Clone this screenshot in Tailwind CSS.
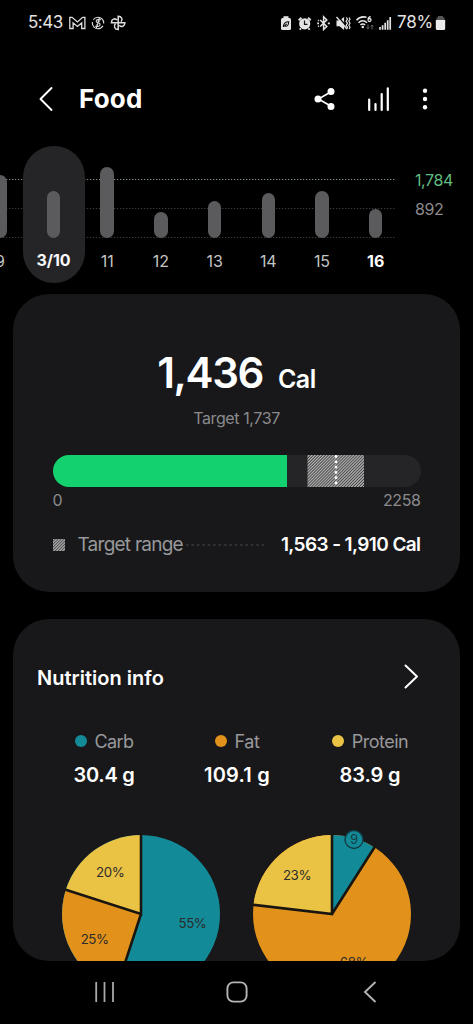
<!DOCTYPE html>
<html lang="en">
<head>
<meta charset="utf-8">
<title>Food</title>
<script src="https://cdn.jsdelivr.net/npm/@tailwindcss/browser@4"></script>
</head>
<body class="bg-black">
<div class="flex h-[1024px] w-[473px] flex-col overflow-hidden bg-black font-['Inter',sans-serif] text-white">

  <!-- Status bar -->
  <header class="flex h-[45px] shrink-0 items-center justify-between pl-7 pr-[27px]">
    <div class="flex items-center text-[#e4e4e4]">
      <span class="w-[41px] text-[17px] tracking-[-0.5px]">5:43</span>
      <svg class="h-[16px] w-[60px]" viewBox="0 0 60 16" fill="none" stroke="#dedede" stroke-width="1.3">
        <path d="M.8 13.5V2.3h2.3L8.4 7l5.3-4.700h2.200v11.200h-3.200V7.800L8.400 11.400 4.100 7.800v5.700z"/>
        <circle cx="29" cy="8" r="5.700" stroke-dasharray="15.500 2.400" stroke-dashoffset="-3" stroke-width="1.100"/>
        <path d="M31.800 4.600h-2.600c-2.600 0-2.900 2.700 0 3.200 2.700.4 2.400 3.600-.3 3.600h-2.600M30.800 6.300h-1.500M27.300 9.800h1.400M30.400 2.800l-3 10.300" stroke-width="1.100"/>
        <path d="M49.200 7.700V1.200c3.500 0 5.100 3.500 2.700 5.600M49.200 7.700h6.700c0 3.500-3.500 5.100-5.600 2.600M49.200 7.700v6.900c-3.500 0-5-3.700-2.700-5.800M49.200 7.700h-6.800c0-3.500 3.600-5 5.600-2.600" stroke-width="1.500"/>
      </svg>
    </div>
    <div class="flex items-center">
      <svg class="h-[16px] w-[117px]" viewBox="280 14 117 16" fill="none" stroke="#e4e4e4" stroke-width="1.200">
        <rect x="281" y="17" width="10" height="12" rx="1.500" fill="#e4e4e4" stroke="none"/>
        <path d="M283.500 16.200h5" stroke-width="2"/>
        <path d="M283.300 26c.2-3.500 1.800-5.200 5.400-5.200 0 3.600-1.600 5-4.200 4.200l2.200-2.200" stroke="#111" stroke-width="1.100"/>
        <circle cx="304.700" cy="22.800" r="4.700" stroke-width="1.800" fill="#e4e4e4"/>
        <path d="M298.700 19.300l2.700-2.500M310.700 19.300l-2.700-2.500M301 27.300l-1.300 1.300M308.400 27.300l1.300 1.300" stroke-width="1.900"/>
        <path d="M304.500 19.500v3.800h3" stroke="#111" stroke-width="1.200"/>
        <path d="M320.200 19l6.600 6.500-3.200 3V15.800l3.200 3.100-6.600 6.600" stroke-width="1.500"/>
        <path d="M317.200 22.300h1.800M327.800 22.300h2M318 19.200l.8.500M318 25.400l.8-.5" stroke-width="1.800"/>
        <path d="M336.500 19.500h3l4.600-3.600v13.200l-4.600-3.800h-3z" fill="#e4e4e4" stroke="none"/>
        <path d="M338.500 16l9 10.500" stroke="#000" stroke-width="1.200"/>
        <path d="M336.500 16l10.500 12" stroke-width="1.400"/>
        <path d="M346.300 16.500l1.200 1.800-1.400 2 1.400 2-1.400 2 1.400 2-.8 1.800M349 16.500l1 1.800-1.200 2 1.200 2-1.200 2 1.200 2-.8 1.800" stroke-width="1.200"/>
        <path d="M356.500 19.200c3.200-3.700 7-3.700 10-2.900M358.500 21.700c2.500-2.700 6-2.700 8.500 0M360.500 24c1.300-1.500 3.300-1.500 4.600 0" stroke-width="1.500"/>
        <circle cx="362.800" cy="26" r="1.300" fill="#e4e4e4" stroke="none"/>
        <path d="M370.700 15.700c-2 .2-2.700 1.700-2.700 3.300a1.500 1.500 0 1 0 1.500-1.500c-.8 0-1.300.5-1.500 1" stroke-width="1.300"/>
        <path d="M368 23.500v4.500m-1.300-1.500 1.300 1.500 1.300-1.500M372 28.500V24m-1.300 1.500 1.300-1.500 1.300 1.500" stroke="#666" stroke-width="1"/>
        <path d="M380 28.800v-2.800M382.600 28.800v-4.600M385.200 28.800v-7M387.700 28.800v-9.500M390.200 28.800V16" stroke-width="1.700"/>
      </svg>
      <span class="w-[38px] whitespace-nowrap text-[17px] tracking-[-0.200px] text-[#e4e4e4]">78%</span>
      <svg class="h-[16px] w-[11px]" viewBox="0 0 11 16">
        <path d="M3 1h5v1.500h1.500v3h-8v-3H3z" fill="#555"/>
        <path d="M.8 5h9.400v8.500a1.500 1.500 0 0 1-1.500 1.500H2.300a1.500 1.500 0 0 1-1.500-1.500z" fill="#ececec"/>
      </svg>
    </div>
  </header>

  <!-- Title bar -->
  <div class="flex h-[101px] shrink-0 items-center pl-[38px] pr-[44px] pt-[6px]">
    <svg class="h-[26px] w-[16px]" viewBox="0 0 16 26" fill="none" stroke="#fff" stroke-width="1.900" stroke-linecap="round" stroke-linejoin="round"><path d="M13.500 2 2.500 13l11 11"/></svg>
    <h1 class="ml-[25px] flex-1 text-[26px] font-bold tracking-[0.200px]">Food</h1>
    <svg class="h-[24px] w-[22px]" viewBox="0 0 22 24" fill="#fff" stroke="#fff" stroke-width="1.600"><path d="M17.500 4.500 4.500 12l13 7.500" fill="none"/><circle cx="4" cy="12" r="2.700"/><circle cx="17" cy="4.500" r="2.700"/><circle cx="17" cy="19.500" r="2.700"/></svg>
    <svg class="ml-[31px] h-[26px] w-[24px]" viewBox="0 0 24 26" stroke="#fff" stroke-width="2.200" stroke-linecap="round"><path d="M2.200 13.500v10.500M8.500 18v6M14.700 8v16M20.800 2.300V24"/></svg>
    <svg class="ml-[30px] h-[24px] w-[8px]" viewBox="0 0 8 24" fill="#fff"><circle cx="4" cy="3.800" r="2.200"/><circle cx="4" cy="12" r="2.200"/><circle cx="4" cy="20.300" r="2.200"/></svg>
  </div>

  <!-- Daily calories chart -->
  <section class="relative flex h-[148px] shrink-0">
    <svg class="absolute left-0 top-0 h-[100px] w-[397px]" viewBox="0 0 397 100" fill="none" stroke-width="1.200" stroke-dasharray="1.300 1.700">
      <path d="M0 33.500h396" stroke="#7d9180"/><path d="M0 62.500h396M0 91.500h396" stroke="#3c3c3c"/>
    </svg>
    <div class="relative ml-[-27px] flex h-[137px] text-center text-[16px] tracking-[-0.100px] text-[#c4c4c4]">
      <div class="flex w-[53.700px] flex-col items-center justify-end pb-[11px]"><i class="h-[63px] w-[13.500px] rounded-full bg-[#5b5b5d]"></i><span class="mt-[11px] h-[23px] leading-[24px]">9</span></div>
      <div class="flex w-[53.700px] flex-col items-center">
        <div class="flex h-[137px] w-[62px] shrink-0 flex-col items-center justify-end rounded-full bg-[#252527] pb-[11px]"><i class="h-[47px] w-[13.500px] rounded-full bg-[#5b5b5d]"></i><span class="mt-[11px] h-[23px] font-bold leading-[23px] text-[#fafafa]">3/10</span></div>
      </div>
      <div class="flex w-[53.700px] flex-col items-center justify-end pb-[11px]"><i class="h-[71px] w-[13.500px] rounded-full bg-[#5b5b5d]"></i><span class="mt-[11px] h-[23px] leading-[24px]">11</span></div>
      <div class="flex w-[53.700px] flex-col items-center justify-end pb-[11px]"><i class="h-[26px] w-[13.500px] rounded-full bg-[#5b5b5d]"></i><span class="mt-[11px] h-[23px] leading-[24px]">12</span></div>
      <div class="flex w-[53.700px] flex-col items-center justify-end pb-[11px]"><i class="h-[37px] w-[13.500px] rounded-full bg-[#5b5b5d]"></i><span class="mt-[11px] h-[23px] leading-[24px]">13</span></div>
      <div class="flex w-[53.700px] flex-col items-center justify-end pb-[11px]"><i class="h-[45px] w-[13.500px] rounded-full bg-[#5b5b5d]"></i><span class="mt-[11px] h-[23px] leading-[24px]">14</span></div>
      <div class="flex w-[53.700px] flex-col items-center justify-end pb-[11px]"><i class="h-[47px] w-[13.500px] rounded-full bg-[#5b5b5d]"></i><span class="mt-[11px] h-[23px] leading-[24px]">15</span></div>
      <div class="flex w-[53.700px] flex-col items-center justify-end pb-[11px]"><i class="h-[29px] w-[13.500px] rounded-full bg-[#5b5b5d]"></i><span class="mt-[11px] h-[23px] font-bold leading-[24px] text-white">16</span></div>
    </div>
    <div class="ml-[12.400px] flex flex-col pt-[20px] text-[16px] leading-[29px] tracking-[-0.400px] text-[#8b8b8b]">
      <span class="text-[#62bb80]">1,784</span><span>892</span>
    </div>
  </section>

  <!-- Calories card -->
  <section class="mx-[13px] h-[298px] shrink-0 rounded-[36px] bg-[#18181a] px-[39.500px] pt-[57px]">
    <div class="flex h-[45px] items-baseline justify-center leading-[44px]">
      <span class="text-[42px] font-semibold tracking-[-1.400px]">1,436</span><span class="ml-[15px] text-[25px] font-semibold tracking-[-0.500px]">Cal</span>
    </div>
    <p class="mt-[10px] h-[24px] text-center text-[16px] leading-[25px] tracking-[-0.400px] text-[#8b8b8d]">Target 1,737</p>
    <svg class="mt-[25px] h-[32px] w-full" viewBox="0 0 368 32" preserveAspectRatio="none">
      <defs>
        <clipPath id="track"><rect width="368" height="32" rx="16"/></clipPath>
        <pattern id="hatch" width="2.100" height="2.100" patternUnits="userSpaceOnUse" patternTransform="rotate(45)"><rect width="2.100" height="2.100" fill="#3c3c3e"/><rect width="1.150" height="2.100" fill="#bababa"/></pattern>
      </defs>
      <g clip-path="url(#track)">
        <rect width="368" height="32" fill="#252527"/><rect width="234" height="32" fill="#14d170"/><rect x="254.500" width="56.500" height="32" fill="url(#hatch)"/>
        <path d="M283 1.500v29" stroke="#fff" stroke-width="2.800" stroke-linecap="round" stroke-dasharray="0 5.300"/>
      </g>
    </svg>
    <div class="mt-[1px] flex h-[24px] justify-between text-[16px] leading-[25px] tracking-[-0.400px] text-[#8b8b8d]"><span>0</span><span>2258</span></div>
    <div class="mt-[21px] flex h-[24px] items-center text-[19px] tracking-[-0.400px]">
      <svg class="h-[12px] w-[12px]" viewBox="0 0 12 12"><rect width="12" height="12" fill="url(#hatch)"/></svg>
      <span class="ml-[13px] w-[106px] whitespace-nowrap pt-px tracking-[-0.750px] text-[#98989a]">Target range</span>
      <svg class="ml-[2px] h-[2px] w-[80px]" viewBox="0 0 80 2"><path d="M0 1h80" stroke="#48484a" stroke-width="1.200" stroke-dasharray="2.700 2.700"/></svg>
      <span class="flex-1 whitespace-nowrap pt-px text-right font-semibold tracking-[-0.600px]">1,563 - 1,910 Cal</span>
    </div>
  </section>

  <!-- Nutrition card -->
  <section class="mx-[13px] mt-[27px] h-[342px] shrink-0 overflow-hidden rounded-[36px] bg-[#18181a] pt-[44px]">
    <div class="flex h-[28px] items-center justify-between pl-[24px] pr-[41px]">
      <h2 class="pt-px text-[20px] font-semibold tracking-[0.020px]">Nutrition info</h2>
      <svg class="h-[26px] w-[16px]" viewBox="0 0 16 26" fill="none" stroke="#fff" stroke-width="2" stroke-linecap="round" stroke-linejoin="round"><path d="M2.500 1.500 14 12.500l-11.500 11"/></svg>
    </div>
    <div class="ml-[24.500px] mt-[38px] flex">
      <div class="w-[133px] text-center"><div class="flex h-6 items-center justify-center gap-2 text-[18px] tracking-[-0.600px] text-[#98989a]"><i class="size-3 rounded-full bg-[#128a97]"></i>Carb</div><div class="mt-[10px] text-[20px] font-semibold leading-6 tracking-[-0.300px]">30.4 g</div></div>
      <div class="w-[133px] text-center"><div class="flex h-6 items-center justify-center gap-2 text-[18px] tracking-[-0.400px] text-[#98989a]"><i class="size-3 rounded-full bg-[#e2921b]"></i>Fat</div><div class="mt-[10px] text-[20px] font-semibold leading-6 tracking-[0.200px]">109.1 g</div></div>
      <div class="w-[133px] text-center"><div class="flex h-6 items-center justify-center gap-2 text-[18px] tracking-[-0.500px] text-[#98989a]"><i class="size-3 rounded-full bg-[#ebc344]"></i>Protein</div><div class="mt-[10px] text-[20px] font-semibold leading-6 tracking-[-0.100px]">83.9 g</div></div>
    </div>
    <svg class="mt-[42px] h-[170px] w-[447px]" viewBox="13 829 447 170" font-family="Inter, sans-serif" font-size="13.300" letter-spacing="-.4" text-anchor="middle" fill="#2b2b2b">
      <circle cx="141" cy="914" r="79" fill="#128a97"/>
      <path d="M141 914V835A79 79 0 0 0 65.900 889.600z" fill="#ebc344"/>
      <path d="M141 914 65.900 889.600A79 79 0 0 0 116.600 989.100z" fill="#e2921b"/>
      <path d="M141 834V914L65 889.500M141 914 116 990.500" fill="none" stroke="#191510" stroke-width="2.600"/>
      <text x="110.300" y="877">20%</text><text x="94.700" y="943.500">25%</text><text x="192.500" y="928">55%</text>
      <circle cx="332" cy="914" r="79" fill="#e2921b"/>
      <path d="M332 914V835A79 79 0 0 0 253.500 904.700z" fill="#ebc344"/>
      <path d="M332 914V835A79 79 0 0 1 374.300 847.300z" fill="#128a97"/>
      <path d="M332 834V914L252.500 904.700M332 914 375 846.500" fill="none" stroke="#191510" stroke-width="2.600"/>
      <circle cx="354" cy="839.500" r="9" fill="#128a97" stroke="#123c42" stroke-width="1.400"/>
      <text x="297" y="880">23%</text><text x="354" y="844" font-size="12.500" fill="#123c42">9</text><text x="354" y="967">68%</text>
    </svg>
  </section>

  <!-- Navigation bar -->
  <nav class="flex h-[63px] shrink-0 items-center pb-px pl-[94px]">
    <svg class="h-[22px] w-[21px]" viewBox="0 0 21 22" stroke="#a9a9a9" stroke-width="1.800"><path d="M2.200 1v20M10.500 1v20M19 1v20"/></svg>
    <svg class="ml-[111px] h-[22px] w-[22px]" viewBox="0 0 22 22" fill="none" stroke="#b4b4b4" stroke-width="1.900"><rect x="1.400" y="1.400" width="19.200" height="19.200" rx="6"/></svg>
    <svg class="ml-[115px] h-[22px] w-[16px]" viewBox="0 0 16 22" fill="none" stroke="#b4b4b4" stroke-width="1.900"><path d="M12.500 1 2 11l10.500 10"/></svg>
  </nav>
</div>
</body>
</html>
